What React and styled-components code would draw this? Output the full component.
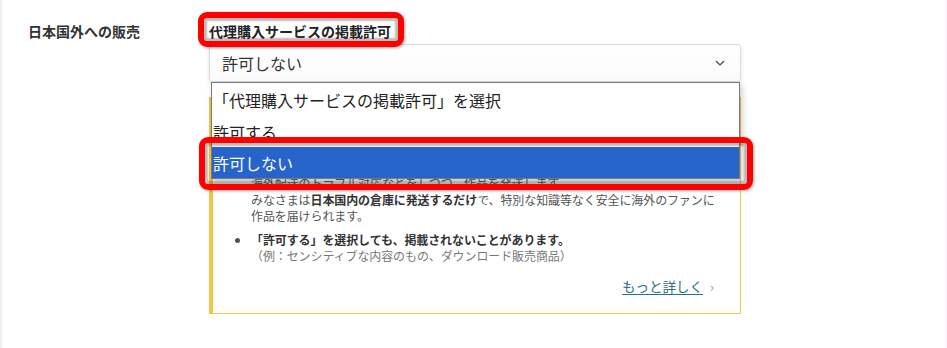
import React from "react";
import styled, { createGlobalStyle } from "styled-components";

const GlobalStyle = createGlobalStyle`
  html, body {
    margin: 0;
    padding: 0;
    background: #fff;
  }
  body {
    font-family: "Noto Sans CJK JP", "Noto Sans", sans-serif;
    color: #333;
  }
`;

const Page = styled.div`
  box-sizing: border-box;
  width: 947px;
  height: 348px;
  padding-top: 22px;
  border-left: 2px solid #edf1f6;
  border-right: 1px solid #f4f1fb;
  overflow: hidden;
`;

const Row = styled.div`
  display: grid;
  grid-template-columns: 207px 532px;
  align-items: start;
`;

const Label = styled.div`
  padding-left: 26px;
  font-size: 14px;
  line-height: 18px;
  font-weight: 700;
  color: #333;
`;

const Field = styled.div`
  display: flex;
  flex-direction: column;
`;

const FieldTitle = styled.div`
  font-size: 14px;
  line-height: 18px;
  font-weight: 700;
  color: #222;
`;

const Marked = styled.span`
  position: relative;
  display: inline-block;
`;

/* red annotation frame drawn over the screenshot */
const Highlight = styled.span`
  position: absolute;
  top: ${(p) => p.$t}px;
  right: ${(p) => p.$r}px;
  bottom: ${(p) => p.$b}px;
  left: ${(p) => p.$l}px;
  border: 6px solid #ff0000;
  border-radius: 9px;
  box-shadow: inset 0 0 2px 3px rgba(60, 60, 60, 0.35),
    1px 1px 3px rgba(0, 0, 0, 0.35);
  pointer-events: none;
  z-index: 5;
`;

const SelectWrap = styled.div`
  position: relative;
  margin-top: 4px;
`;

const Select = styled.div`
  box-sizing: border-box;
  height: 38px;
  display: flex;
  align-items: center;
  justify-content: space-between;
  padding: 0 15px 0 12px;
  background: linear-gradient(#fff, #fbfbfb);
  border: 1px solid #d8dcdf;
  border-radius: 3px;
  box-shadow: 0 2px 4px rgba(15, 17, 17, 0.12);
  font-size: 16px;
  color: #333;
`;

const Chevron = () => (
  <svg width="10" height="6" viewBox="0 0 10 6">
    <path d="M1 1l4 4 4-4" fill="none" stroke="#444" strokeWidth="1.2" />
  </svg>
);

const Dropdown = styled.ul`
  position: absolute;
  top: 100%;
  left: 2px;
  width: 529px;
  box-sizing: border-box;
  margin: 0;
  padding: 0;
  list-style: none;
  background: #fff;
  border: 1px solid #7a7a7a;
  box-shadow: 2px 3px 6px rgba(0, 0, 0, 0.22);
  z-index: 3;
`;

const Option = styled.li`
  position: relative;
  height: ${(p) => (p.$first ? 33 : 31)}px;
  display: flex;
  align-items: center;
  padding-left: 1px;
  font-size: 16px;
  color: ${(p) => (p.$active ? "#fff" : "#222")};
  background: ${(p) => (p.$active ? "#2664cb" : "transparent")};
`;

const Notice = styled.div`
  box-sizing: border-box;
  margin-top: 15px;
  padding: 16px 14px 16px 23px;
  border: 1px solid #f3c553;
  border-left: 4px solid #f6c445;
  background: #fff;
`;

const NoticeHead = styled.div`
  font-size: 13px;
  line-height: 22px;
  font-weight: 700;
  margin-bottom: 6px;
  color: #333;
`;

const Bullets = styled.ul`
  margin: 0;
  padding-left: 15px;
  color: #555;
`;

const Bullet = styled.li`
  font-size: 12px;
  line-height: 16.5px;
  letter-spacing: -0.1px;
  white-space: nowrap;
  margin-top: ${(p) => (p.$gap ? 7 : 0)}px;
  &::marker {
    color: #555;
  }
  b {
    color: #333;
    font-weight: 700;
  }
`;

const Note = styled.span`
  color: #777;
`;

const More = styled.div`
  margin-top: 11px;
  padding-right: 12px;
  text-align: right;
  font-size: 13.5px;
  line-height: 20px;
`;

const MoreLink = styled.a`
  color: #2b6f86;
  text-decoration: underline;
  text-underline-offset: 2px;
`;

const Arrow = styled.span`
  margin-left: 7px;
  color: #999;
  font-size: 13px;
`;

export default function App() {
  return (
    <>
      <GlobalStyle />
      <Page>
        <Row>
          <Label>日本国外への販売</Label>
          <Field>
            <FieldTitle>
              <Marked>
                代理購入サービスの掲載許可
                <Highlight $t={-10} $r={-13} $b={-7} $l={-11} />
              </Marked>
            </FieldTitle>
            <SelectWrap>
              <Select>
                許可しない
                <Chevron />
              </Select>
              <Dropdown>
                <Option $first>「代理購入サービスの掲載許可」を選択</Option>
                <Option>許可する</Option>
                <Option $active>
                  許可しない
                  <Highlight $t={-10} $r={-14} $b={-12} $l={-13} />
                </Option>
              </Dropdown>
            </SelectWrap>
            <Notice>
              <NoticeHead>代理購入サービスとは</NoticeHead>
              <Bullets>
                <Bullet>
                  海外のお客さまから注文が入ると、代理購入サービスが作品を購入し、
                  <br />
                  国内の倉庫で受け取ったうえで海外へ転送します。
                  <br />
                  海外配送のトラブル対応などをしつつ、作品を発送します。
                  <br />
                  みなさまは<b>日本国内の倉庫に発送するだけ</b>で、特別な知識等なく安全に海外のファンに
                  <br />
                  作品を届けられます。
                </Bullet>
                <Bullet $gap>
                  <b>「許可する」を選択しても、掲載されないことがあります。</b>
                  <br />
                  <Note>（例：センシティブな内容のもの、ダウンロード販売商品）</Note>
                </Bullet>
              </Bullets>
              <More>
                <MoreLink href="#">もっと詳しく</MoreLink>
                <Arrow>›</Arrow>
              </More>
            </Notice>
          </Field>
        </Row>
      </Page>
    </>
  );
}
